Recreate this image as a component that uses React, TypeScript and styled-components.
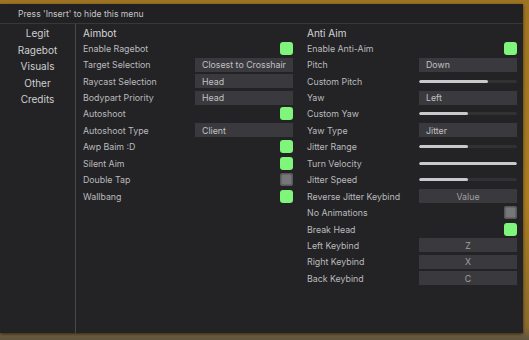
import styled, { createGlobalStyle } from 'styled-components';

const GlobalStyle = createGlobalStyle`
  html, body {
    margin: 0;
    padding: 0;
    width: 529px;
    height: 340px;
    overflow: hidden;
    background: linear-gradient(180deg, #9e7424 0%, #a97c22 60%, #8a6a2c 96%, #5f5444 100%);
    font-family: Inter, "Noto Sans", sans-serif;
  }
`;

const Stage = styled.div`
  width: 529px;
  height: 340px;
  padding: 4px 6px 0 0;
  box-sizing: border-box;
`;

const Window = styled.div`
  width: 523px;
  height: 329px;
  display: flex;
  flex-direction: column;
  background-color: #232326;
  box-shadow: 0 1px 3px rgba(0, 0, 0, 0.6);
`;

const Header = styled.div`
  height: 19px;
  display: flex;
  align-items: center;
  padding-left: 18px;
  border-bottom: 1px solid #38383b;
  background-color: #212123;
  color: #c6c6c6;
  font-size: 8.6px;
`;

const Body = styled.div`
  flex: 1;
  display: flex;
`;

const Sidebar = styled.div`
  width: 75px;
  padding-top: 1px;
  border-right: 1px solid #48484b;
  display: flex;
  flex-direction: column;
`;

const Tab = styled.div`
  height: 16.5px;
  display: flex;
  align-items: center;
  justify-content: center;
  color: #cfcfcf;
  font-size: 10px;
`;

const Columns = styled.div`
  display: grid;
  grid-template-columns: 210px 210px;
  column-gap: 14px;
  padding: 2px 0 0 7px;
`;

const Column = styled.div`
  display: flex;
  flex-direction: column;
`;

const Title = styled.div`
  height: 14px;
  display: flex;
  align-items: center;
  color: #d6d6d6;
  font-size: 10px;
`;

const Row = styled.div`
  height: 16.45px;
  display: flex;
  align-items: center;
  justify-content: space-between;
`;

const Label = styled.span`
  color: #bababc;
  font-size: 8.8px;
`;

const Toggle = styled.div<{ $on: boolean }>`
  width: 13px;
  height: 13px;
  border-radius: 3px;
  box-sizing: border-box;
  background-color: ${(p) => (p.$on ? '#80f57c' : '#77777a')};
  box-shadow: ${(p) => (p.$on ? 'none' : 'inset 0 0 0 1.5px #58585b')};
`;

const Dropdown = styled.div`
  width: 98px;
  height: 14px;
  display: flex;
  align-items: center;
  padding-left: 7px;
  box-sizing: border-box;
  background-color: #3a3a3e;
  color: #c0c0c2;
  font-size: 8.8px;
`;

const KeyButton = styled.div`
  width: 98px;
  height: 14px;
  display: flex;
  align-items: center;
  justify-content: center;
  background-color: #3a3a3e;
  color: #a0a0a2;
  font-size: 8.8px;
`;

const SliderTrack = styled.div`
  width: 98px;
  height: 3px;
  border-radius: 1.5px;
  background-color: #313134;
  overflow: hidden;
`;

const SliderFill = styled.div`
  height: 100%;
  border-radius: 1.5px;
  background-color: #c9c9cb;
`;

type Control =
  | { kind: 'toggle'; on: boolean }
  | { kind: 'dropdown'; value: string }
  | { kind: 'slider'; value: number }
  | { kind: 'key'; value: string };

type Setting = { label: string; control: Control };

const aimbot: Setting[] = [
  { label: 'Enable Ragebot', control: { kind: 'toggle', on: true } },
  { label: 'Target Selection', control: { kind: 'dropdown', value: 'Closest to Crosshair' } },
  { label: 'Raycast Selection', control: { kind: 'dropdown', value: 'Head' } },
  { label: 'Bodypart Priority', control: { kind: 'dropdown', value: 'Head' } },
  { label: 'Autoshoot', control: { kind: 'toggle', on: true } },
  { label: 'Autoshoot Type', control: { kind: 'dropdown', value: 'Client' } },
  { label: 'Awp Baim :D', control: { kind: 'toggle', on: true } },
  { label: 'Silent Aim', control: { kind: 'toggle', on: true } },
  { label: 'Double Tap', control: { kind: 'toggle', on: false } },
  { label: 'Wallbang', control: { kind: 'toggle', on: true } },
];

const antiAim: Setting[] = [
  { label: 'Enable Anti-Aim', control: { kind: 'toggle', on: true } },
  { label: 'Pitch', control: { kind: 'dropdown', value: 'Down' } },
  { label: 'Custom Pitch', control: { kind: 'slider', value: 0.7 } },
  { label: 'Yaw', control: { kind: 'dropdown', value: 'Left' } },
  { label: 'Custom Yaw', control: { kind: 'slider', value: 0.5 } },
  { label: 'Yaw Type', control: { kind: 'dropdown', value: 'Jitter' } },
  { label: 'Jitter Range', control: { kind: 'slider', value: 0.5 } },
  { label: 'Turn Velocity', control: { kind: 'slider', value: 1 } },
  { label: 'Jitter Speed', control: { kind: 'slider', value: 0.5 } },
  { label: 'Reverse Jitter Keybind', control: { kind: 'key', value: 'Value' } },
  { label: 'No Animations', control: { kind: 'toggle', on: false } },
  { label: 'Break Head', control: { kind: 'toggle', on: true } },
  { label: 'Left Keybind', control: { kind: 'key', value: 'Z' } },
  { label: 'Right Keybind', control: { kind: 'key', value: 'X' } },
  { label: 'Back Keybind', control: { kind: 'key', value: 'C' } },
];

const tabs = ['Legit', 'Ragebot', 'Visuals', 'Other', 'Credits'];

const renderControl = (c: Control) => {
  switch (c.kind) {
    case 'toggle':
      return <Toggle $on={c.on} />;
    case 'dropdown':
      return <Dropdown>{c.value}</Dropdown>;
    case 'key':
      return <KeyButton>{c.value}</KeyButton>;
    case 'slider':
      return (
        <SliderTrack>
          <SliderFill style={{ width: `${c.value * 100}%` }} />
        </SliderTrack>
      );
  }
};

const Section = ({ title, items }: { title: string; items: Setting[] }) => (
  <Column>
    <Title>{title}</Title>
    {items.map((s) => (
      <Row key={s.label}>
        <Label>{s.label}</Label>
        {renderControl(s.control)}
      </Row>
    ))}
  </Column>
);

export default function App() {
  return (
    <>
      <GlobalStyle />
      <Stage>
        <Window>
          <Header>Press 'Insert' to hide this menu</Header>
          <Body>
            <Sidebar>
              {tabs.map((t) => (
                <Tab key={t}>{t}</Tab>
              ))}
            </Sidebar>
            <Columns>
              <Section title="Aimbot" items={aimbot} />
              <Section title="Anti Aim" items={antiAim} />
            </Columns>
          </Body>
        </Window>
      </Stage>
    </>
  );
}
